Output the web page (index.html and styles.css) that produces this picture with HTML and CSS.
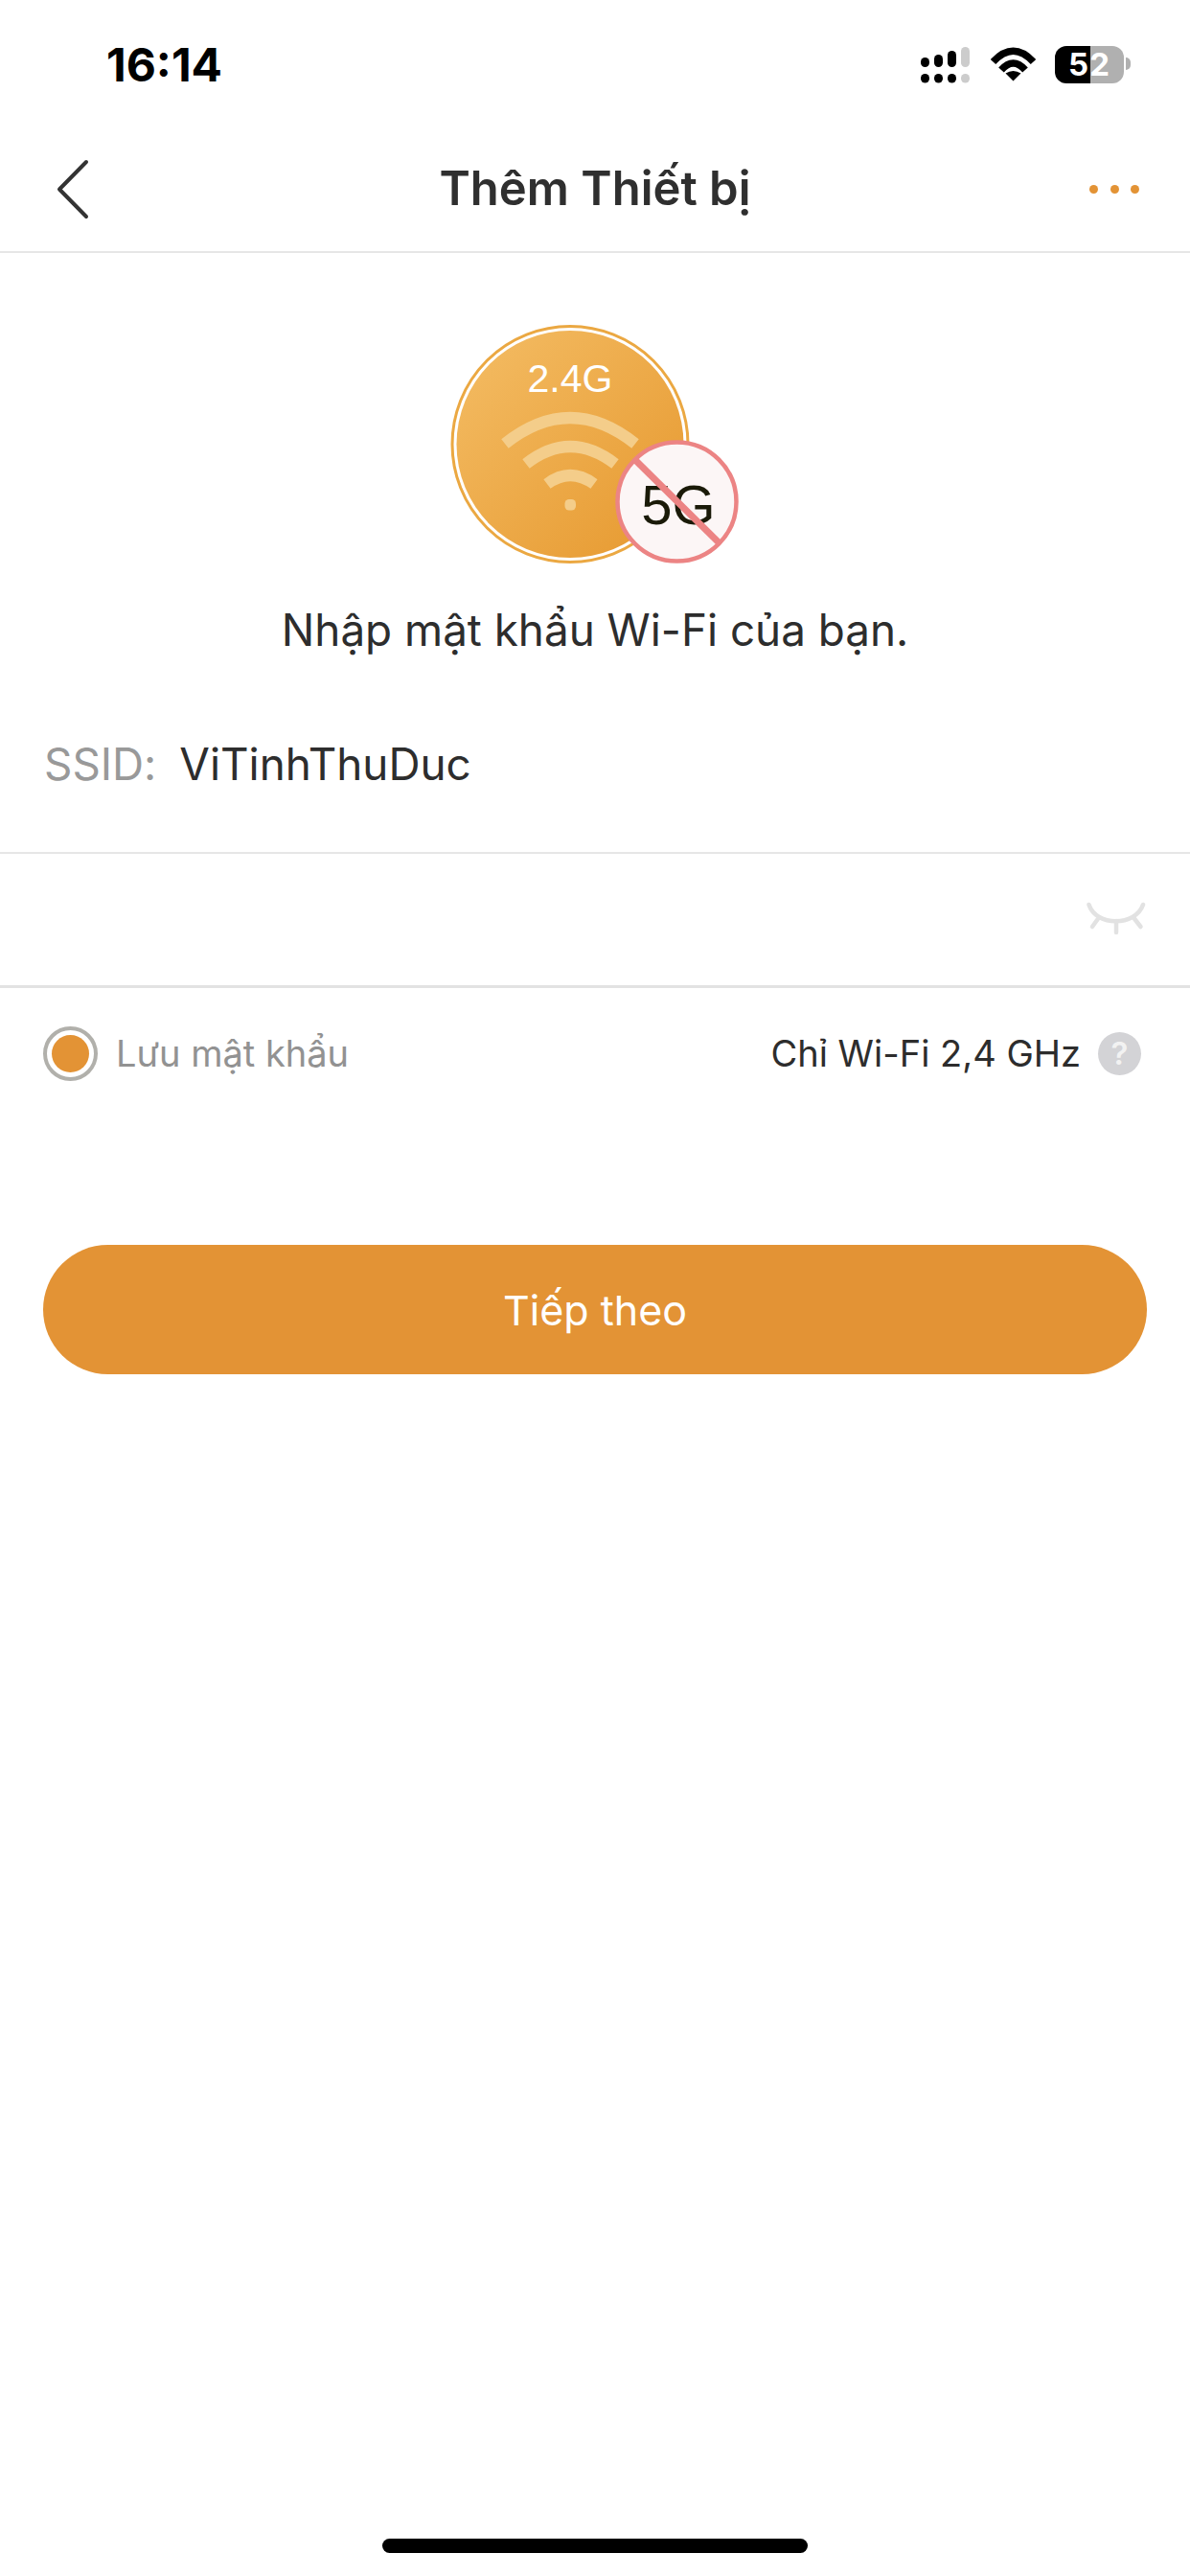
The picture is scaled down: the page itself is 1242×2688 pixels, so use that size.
FILE: index.html
```html
<!DOCTYPE html>
<html lang="vi">
<head>
<meta charset="utf-8">
<title>Thêm Thiết bị</title>
<link rel="stylesheet" href="styles.css">
</head>
<body>
<div class="page">
  <header class="status">
    <span class="time">16:14</span>
    <div class="status-icons">
      <svg class="signal" width="51" height="38" viewBox="959 49 51 38">
        <g fill="#000">
          <rect x="959" y="60" width="9" height="10" rx="4.5"/>
          <rect x="973" y="57" width="9" height="13" rx="4.5"/>
          <rect x="987" y="53" width="9" height="17" rx="4.5"/>
          <rect x="959" y="77" width="9" height="9.5" rx="4.5"/>
          <rect x="973" y="77" width="9" height="9.5" rx="4.5"/>
          <rect x="987" y="77" width="9" height="9.5" rx="4.5"/>
        </g>
        <g fill="#ccc">
          <rect x="1001" y="49" width="9" height="21" rx="4.5"/>
          <rect x="1001" y="77" width="9" height="9.5" rx="4.5"/>
        </g>
      </svg>
      <svg class="wifi" width="47" height="36" viewBox="1032 49 47 36">
        <path d="M1034.500 64.500 Q1055.500 42 1076.500 64.500" fill="none" stroke="#000" stroke-width="7.500"/>
        <path d="M1043 73 Q1055.500 59 1068 73" fill="none" stroke="#000" stroke-width="7.500"/>
        <path d="M1055.500 84.500 L1047.500 76.500 Q1055.500 71.500 1063.500 76.500 Z" fill="#000"/>
      </svg>
      <div class="battery"><span class="battery-level">52</span></div>
      <span class="battery-tip"></span>
    </div>
  </header>

  <nav class="nav">
    <svg class="back" width="50" height="64" viewBox="0 0 50 64">
      <path d="M44 4 L16 32.500 L44 61" fill="none" stroke="#333" stroke-width="4" stroke-linejoin="round" stroke-linecap="round"/>
    </svg>
    <h1 class="title">Thêm Thiết bị</h1>
    <div class="more"><i></i><i></i><i></i></div>
  </nav>

  <main class="main">
    <svg class="hero" width="312" height="270" viewBox="465 330 312 270">
      <defs>
        <linearGradient id="disc" x1="0" y1="0" x2="1" y2="1">
          <stop offset="0" stop-color="#f4bd65"/>
          <stop offset="1" stop-color="#e6982e"/>
        </linearGradient>
      </defs>
      <circle cx="595" cy="463.500" r="123" fill="#fff" stroke="#eba842" stroke-width="3"/>
      <circle cx="595" cy="463.500" r="118.500" fill="url(#disc)"/>
      <text class="hero-24" x="595" y="409" text-anchor="middle">2.4G</text>
      <g fill="none" stroke="#f4cd8a" stroke-width="12">
        <path d="M527 463 Q595 409 663 463"/>
        <path d="M549 484 Q595 448 642 484"/>
        <path d="M571 505 Q595 487 620 505"/>
      </g>
      <rect x="589.500" y="521" width="11.500" height="11.500" rx="4.500" fill="#f4cd8a"/>
      <circle cx="706.500" cy="523.500" r="62" fill="#fcf6f6" stroke="#ec8484" stroke-width="4.500"/>
      <text class="hero-5g" x="708" y="547" text-anchor="middle">5G</text>
      <path d="M663 480 L750 566" stroke="#ec8484" stroke-width="7" fill="none"/>
    </svg>
    <p class="prompt">Nhập mật khẩu Wi-Fi của bạn.</p>

    <div class="ssid-row">
      <span class="ssid-label">SSID:</span>
      <span class="ssid-value">ViTinhThuDuc</span>
    </div>

    <div class="password-row">
      <svg class="eye" width="62" height="36" viewBox="0 0 62 36">
        <g fill="none" stroke="#e2e2e2" stroke-width="4.500" stroke-linecap="round">
          <path d="M2.500 3 C10 26 51 26 59 3"/>
          <path d="M31 20 V32"/>
          <path d="M12.500 17 L6 26"/>
          <path d="M49.500 17 L56.500 26"/>
        </g>
      </svg>
    </div>

    <div class="options">
      <div class="save">
        <span class="radio"><span class="radio-dot"></span></span>
        <span class="save-label">Lưu mật khẩu</span>
      </div>
      <div class="band">
        <span class="band-label">Chỉ Wi-Fi 2,4 GHz</span>
        <span class="help">?</span>
      </div>
    </div>

    <button class="next" type="button">Tiếp theo</button>
  </main>

  <div class="home-indicator"></div>
</div>
</body>
</html>
```

FILE: styles.css
```css
* { box-sizing: border-box; }
html, body { margin: 0; padding: 0; background: #fff; }
body { font-family: Inter, "Liberation Sans", sans-serif; color: #2d2d2d; }
.page { width: 1242px; height: 2688px; display: flex; flex-direction: column; overflow: hidden; }

.status { height: 132px; display: flex; justify-content: space-between; padding: 44px 62px 0 111px; }
.time { font-size: 48px; font-weight: 700; line-height: 48px; color: #000; }
.status-icons { display: flex; align-items: flex-start; padding-top: 5px; }
.signal { margin-right: 22px; }
.wifi { margin-right: 20px; }
.battery { width: 72px; height: 39px; margin-top: -1px; border-radius: 12px; background: linear-gradient(90deg, #000 51.500%, #b0b0b0 51.500%); display: flex; align-items: center; justify-content: center; }
.battery-level { font-size: 33px; font-weight: 700; color: #fff; letter-spacing: 1px; line-height: 39px; }
.battery-tip { width: 5px; height: 13px; margin: 11px 0 0 2px; border-radius: 0 6px 6px 0; background: #b0b0b0; }

.nav { height: 132px; display: grid; grid-template-columns: 1fr auto 1fr; align-items: center; padding: 0 46px; border-bottom: 2px solid #e6e6e6; }
.back { display: block; }
.title { margin: 0; font-size: 49px; font-weight: 600; color: #2f2f2f; line-height: 60px; }
.more { display: flex; justify-content: flex-end; gap: 12.500px; padding-right: 7px; }
.more i { width: 9px; height: 9px; border-radius: 50%; background: #e39335; }

.main { display: flex; flex-direction: column; }
.hero { display: block; margin: 66px auto 0; }
.hero-24 { font-family: "Liberation Sans", sans-serif; font-size: 41px; fill: #fff; }
.hero-5g { font-family: "Liberation Sans", sans-serif; font-size: 58px; fill: #1a1a08; }
.prompt { margin: 30px 0 0; text-align: center; font-size: 45.800px; line-height: 56px; color: #2d2d2d; }

.ssid-row { margin-top: 20px; height: 185px; padding: 0 46px; display: flex; align-items: center; gap: 24px; font-size: 45.800px; font-feature-settings: "calt" 0; border-bottom: 2px solid #e6e6e6; }
.ssid-label { color: #999; }
.ssid-value { color: #2d2d2d; }

.password-row { height: 140px; padding: 0 46px 2px 0; display: flex; justify-content: flex-end; align-items: center; border-bottom: 3px solid #e2e2e2; }

.options { height: 136px; padding: 0 51px 0 45px; display: flex; justify-content: space-between; align-items: center; }
.save, .band { display: flex; align-items: center; }
.radio { width: 57px; height: 57px; border: 4px solid #b1b0ab; border-radius: 50%; display: flex; align-items: center; justify-content: center; }
.radio-dot { width: 39px; height: 39px; border-radius: 50%; background: #e39335; }
.save-label { margin-left: 19px; font-size: 38px; color: #929292; }
.band-label { font-size: 38px; color: #2d2d2d; }
.help { margin-left: 18px; width: 45px; height: 45px; border-radius: 50%; background: #d3d3d6; color: #f2f2f2; font-size: 33px; font-weight: 600; display: flex; align-items: center; justify-content: center; }

.next { margin: 132px 45px 0; height: 135px; border: 0; border-radius: 68px; background: #e39335; color: #fff; font: 400 43px Inter, "Liberation Sans", sans-serif; }

.home-indicator { width: 444px; height: 15px; margin: auto auto 24px; border-radius: 8px; background: #000; }
```
